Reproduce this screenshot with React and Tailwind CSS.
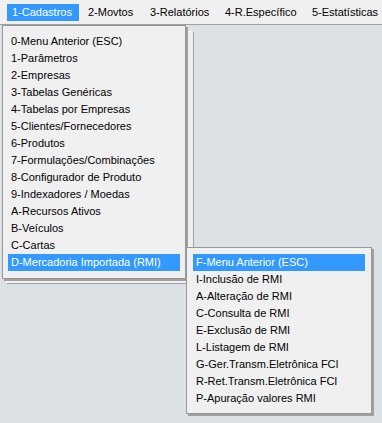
import React from 'react'

const topMenu = [
  { label: '1-Cadastros', w: 'w-[72px]', active: true },
  { label: '2-Movtos', w: 'w-[62px]' },
  { label: '3-Relatórios', w: 'w-[75px]' },
  { label: '4-R.Específico', w: 'w-[87px]' },
  { label: '5-Estatísticas', w: 'w-[75px]' },
]

const cadastros = [
  '0-Menu Anterior (ESC)',
  '1-Parâmetros',
  '2-Empresas',
  '3-Tabelas Genéricas',
  '4-Tabelas por Empresas',
  '5-Clientes/Fornecedores',
  '6-Produtos',
  '7-Formulações/Combinações',
  '8-Configurador de Produto',
  '9-Indexadores / Moedas',
  'A-Recursos Ativos',
  'B-Veículos',
  'C-Cartas',
  'D-Mercadoria Importada (RMI)',
]

const rmi = [
  'F-Menu Anterior (ESC)',
  'I-Inclusão de RMI',
  'A-Alteração de RMI',
  'C-Consulta de RMI',
  'E-Exclusão de RMI',
  'L-Listagem de RMI',
  'G-Ger.Transm.Eletrônica FCI',
  'R-Ret.Transm.Eletrônica FCI',
  'P-Apuração valores RMI',
]

function MenuRow({ label, active }) {
  return (
    <div
      className={
        'h-[17px] leading-[17px] pl-[3px] whitespace-nowrap ' +
        (active ? 'bg-[#3399ff] text-white' : 'text-black')
      }
    >
      {label}
    </div>
  )
}

export default function App() {
  return (
    <div
      className="relative w-[382px] h-[423px] overflow-hidden bg-[#dce1e5] text-[11px]"
      style={{ fontFamily: '"Liberation Sans", Arial, sans-serif' }}
    >
      {/* menu bar */}
      <div className="h-[25px] bg-[#f0f0f0] border-b border-[#a0a0a0] flex items-start pt-[4px] pl-[7px]">
        {topMenu.map(m => (
          <div
            key={m.label}
            className={
              'h-[17px] leading-[17px] pl-[5px] whitespace-nowrap ' +
              m.w +
              (m.active ? ' bg-[#3399ff] text-white mr-[4px]' : ' text-black')
            }
          >
            {m.label}
          </div>
        ))}
      </div>

      {/* window behind the menus */}
      <div className="absolute left-[6px] top-[31px] w-[188px] h-[253px] bg-[#f0f0f0] border-t border-l border-white border-r border-b border-r-[#a0a0a0] border-b-[#a0a0a0]" />

      {/* Cadastros dropdown */}
      <div className="absolute left-[2px] top-[25px] w-[184px] bg-[#f0f0f0] border border-[#979797] shadow-[2px_2px_0_#a0a0a0] pt-[7px] pb-[7px] px-[5px]">
        {cadastros.map((c, i) => (
          <MenuRow key={c} label={c} active={i === cadastros.length - 1} />
        ))}
      </div>

      {/* RMI submenu */}
      <div className="absolute left-[186px] top-[247px] w-[186px] bg-[#f0f0f0] border border-[#979797] shadow-[2px_2px_0_#a0a0a0] pt-[6px] pb-[6px] px-[6px]">
        {rmi.map((c, i) => (
          <MenuRow key={c} label={c} active={i === 0} />
        ))}
      </div>
    </div>
  )
}
